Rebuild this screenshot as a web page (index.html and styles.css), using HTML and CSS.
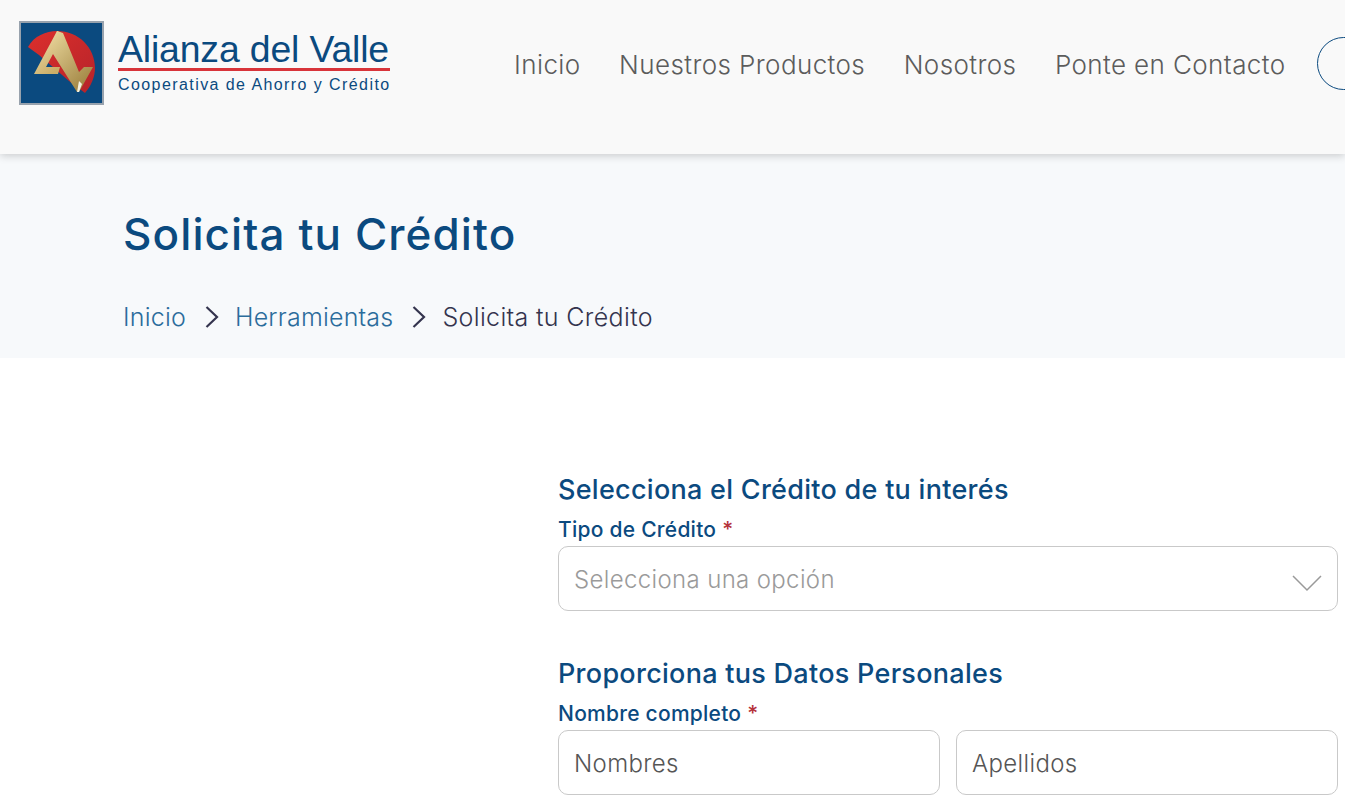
FILE: index.html
```html
<!DOCTYPE html>
<html lang="es">
<head>
<meta charset="utf-8">
<title>Solicita tu Crédito</title>
<link rel="stylesheet" href="styles.css">
</head>
<body>
<header class="site-header">
  <a class="brand" href="#">
    <svg class="brand-mark" viewBox="0 0 85 84" width="85" height="84" aria-hidden="true">
      <defs>
        <linearGradient id="gold" x1="0" y1="0" x2="0.6" y2="1">
          <stop offset="0" stop-color="#f3e4b4"/>
          <stop offset="1" stop-color="#cbae68"/>
        </linearGradient>
        <linearGradient id="goldDark" x1="0" y1="0" x2="0.7" y2="1">
          <stop offset="0" stop-color="#e8d59a"/>
          <stop offset="1" stop-color="#a08442"/>
        </linearGradient>
        <linearGradient id="red" x1="0" y1="0" x2="1" y2="1">
          <stop offset="0" stop-color="#dc2f2c"/>
          <stop offset="1" stop-color="#b5232a"/>
        </linearGradient>
      </defs>
      <rect x="1" y="1" width="83" height="82" fill="#0b4a7f" stroke="#98a2ad" stroke-width="2"/>
      <path d="M9 26 C15 15 27 10 38 10 C60 10 76 27 76 47 C76 56 72 65 66 72 L50 60 L20 34 Z" fill="url(#red)"/>
      <path d="M38 10 L15 53 L39 53 L41 46 L27 46 L34 33 L42 30 L44 13 Z" fill="url(#gold)"/>
      <path d="M38 10 L44 12 L60 51 L65 46 L74 46 L60 71 L58 71 L34 33 Z" fill="url(#goldDark)"/>
      <path d="M58 71 L60 71 L63 63 L60 60 Z" fill="#f4f0e0"/>
    </svg>
    <span class="brand-text">
      <span class="brand-name">Alianza del Valle</span>
      <span class="brand-sub">Cooperativa de Ahorro y Crédito</span>
    </span>
  </a>
  <nav class="main-nav">
    <a href="#">Inicio</a>
    <a href="#">Nuestros Productos</a>
    <a href="#">Nosotros</a>
    <a href="#">Ponte en Contacto</a>
  </nav>
  <a class="outline-btn" href="#" aria-label="Acceder"></a>
</header>

<section class="page-hero">
  <h1>Solicita tu Crédito</h1>
  <ol class="crumbs">
    <li><a href="#">Inicio</a></li>
    <li class="sep"><svg viewBox="0 0 14 22" width="14" height="22" aria-hidden="true"><path d="M1.500 1 L12 11 L1.500 21" fill="none" stroke="#34344e" stroke-width="2.200"/></svg></li>
    <li><a href="#">Herramientas</a></li>
    <li class="sep"><svg viewBox="0 0 14 22" width="14" height="22" aria-hidden="true"><path d="M1.500 1 L12 11 L1.500 21" fill="none" stroke="#34344e" stroke-width="2.200"/></svg></li>
    <li class="current">Solicita tu Crédito</li>
  </ol>
</section>

<main class="form-wrap">
  <form class="credit-form">
    <h2>Selecciona el Crédito de tu interés</h2>
    <label class="field-label">Tipo de Crédito <span class="req">*</span></label>
    <div class="select-box">
      <span class="placeholder-light">Selecciona una opción</span>
      <svg viewBox="0 0 30 18" width="30" height="18" aria-hidden="true"><path d="M1 2 L15 16 L29 2" fill="none" stroke="#9a9a9a" stroke-width="1.500"/></svg>
    </div>
    <h2 class="second">Proporciona tus Datos Personales</h2>
    <label class="field-label">Nombre completo <span class="req">*</span></label>
    <div class="field-row">
      <div class="text-box">Nombres</div>
      <div class="text-box">Apellidos</div>
    </div>
  </form>
</main>
</body>
</html>
```
FILE: styles.css
```css
* { box-sizing: border-box; }
html, body { margin: 0; padding: 0; height: 808px; overflow: hidden; }
body { background: #fff; font-family: "Inter", "Noto Sans", sans-serif; color: #333; width: 1345px; }
a { text-decoration: none; color: inherit; }

.site-header {
  height: 154px;
  background: #f9f9f9;
  box-shadow: 0 2px 8px rgba(0, 0, 0, .18);
  display: flex;
  align-items: flex-start;
  padding: 21px 0 0 19px;
  position: relative;
  z-index: 1;
  overflow: hidden;
}
.brand { display: flex; align-items: flex-start; gap: 14px; width: 495px; flex: none; }
.brand-mark { flex: none; display: block; }
.brand-text { display: flex; flex-direction: column; width: 272px; padding-top: 9px; }
.brand-name {
  font-family: "Liberation Sans", Arial, sans-serif;
  font-size: 37.400px;
  line-height: 38px;
  color: #0b4a7f;
  letter-spacing: -0.160px;
  border-bottom: 3px solid #d8343a;
  white-space: nowrap;
}
.brand-sub {
  font-family: "Liberation Sans", Arial, sans-serif;
  font-size: 16px;
  line-height: 20px;
  letter-spacing: 1.420px;
  color: #0b4a7f;
  white-space: nowrap;
  padding-top: 4px;
}
.main-nav {
  display: flex;
  gap: 38.500px;
  font-size: 26px;
  line-height: 44px;
  font-weight: 300;
  letter-spacing: .4px;
  color: #5c5c5c;
  padding-top: 22px;
  flex: none;
}
.outline-btn {
  flex: none;
  width: 200px;
  height: 53px;
  margin: 16px 0 0 31px;
  border: 1px solid #0b4a7f;
  border-radius: 27px;
}

.page-hero { height: 204px; background: #f7f9fb; padding: 53px 0 0 123px; }
.page-hero h1 {
  margin: 0;
  font-size: 44px;
  line-height: 54px;
  font-weight: 500;
  letter-spacing: 1.100px;
  color: #0b4a7f;
}
.crumbs {
  list-style: none;
  margin: 39px 0 0;
  padding: 0;
  display: flex;
  align-items: center;
  font-size: 25px;
  line-height: 34px;
  font-weight: 300;
  letter-spacing: .2px;
  color: #34344e;
}
.crumbs a { color: #2b6c9b; }
.crumbs .sep { display: flex; margin: 0 16px 0 19px; }
.crumbs .current { color: #34344e; letter-spacing: .35px; }

.form-wrap { padding: 113px 7px 0 558px; }
.credit-form h2 {
  margin: 0;
  font-size: 27px;
  line-height: 38px;
  font-weight: 500;
  letter-spacing: .28px;
  color: #0b4a7f;
}
.credit-form h2.second { margin-top: 44px; }
.field-label {
  display: block;
  font-size: 21px;
  line-height: 26px;
  font-weight: 500;
  letter-spacing: .25px;
  color: #0b4a7f;
  margin-top: 8px;
  margin-bottom: 3px;
}
.req { color: #b5323a; }
.select-box, .text-box {
  height: 65px;
  background: #fff;
  border: 1px solid #c9c9c9;
  border-radius: 10px;
  font-size: 24px;
  font-weight: 300;
  letter-spacing: .35px;
  display: flex;
  align-items: center;
  padding: 1px 15px 0;
}
.select-box { justify-content: space-between; }
.select-box svg { flex: none; margin-top: 8px; }
.placeholder-light { color: #9a9a9a; }
.text-box { color: #555; }
.field-row { display: grid; grid-template-columns: 1fr 1fr; gap: 16px; }
```
